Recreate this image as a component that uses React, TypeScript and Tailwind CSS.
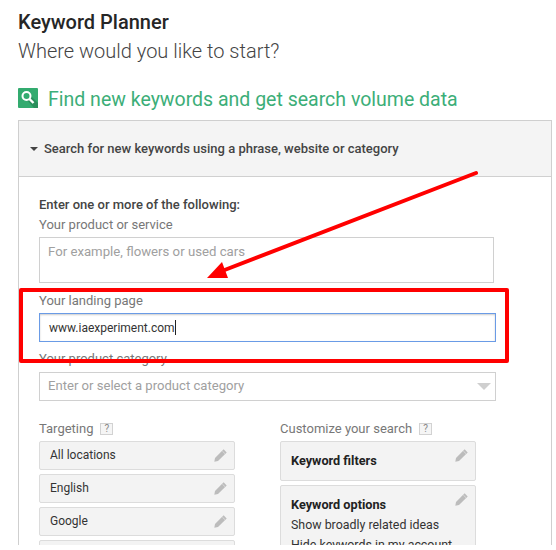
import React from "react";

const roboto = "[font-family:Roboto,'Liberation_Sans',sans-serif]";

function Pencil() {
  return (
    <svg width="13" height="13" viewBox="0 0 13 13" className="absolute right-[7px] top-[7px]">
      <path d="M9.6 0.3 L12.7 3.4 L4 12 L0.3 12.8 L1 9 Z" fill="#bcbcbc" />
      <path d="M8.3 2 L11 4.7" stroke="#e6e6e6" strokeWidth="0.7" />
    </svg>
  );
}

function Help() {
  return (
    <span className="ml-[7px] inline-flex h-[12px] w-[13px] items-center justify-center border border-[#d2d2d2] bg-[#f5f5f5] text-[10px] leading-none text-[#888]">
      ?
    </span>
  );
}

function Card({ children }: { children?: React.ReactNode }) {
  return (
    <div className="relative flex h-[29px] w-[196px] shrink-0 items-center rounded-[2px] border border-[#dcdcdc] bg-[#f3f3f3] pb-[2px] pl-[10px] text-[12px] text-[#333]">
      {children}
      <Pencil />
    </div>
  );
}

export default function App() {
  return (
    <div className={`relative h-[545px] w-[556px] overflow-hidden bg-white ${roboto}`}>
      <div className="pl-[18px] pt-[10px]">
        <h1 className="text-[20px] font-medium leading-[24px] text-[#262626]">Keyword Planner</h1>
        <p className="mt-[5px] text-[20px] font-light leading-[24px] text-[#444]">Where would you like to start?</p>
        <div className="mt-[24px] flex items-start">
          <svg width="20" height="20" viewBox="0 0 20 20" className="mt-px shrink-0">
            <rect width="20" height="20" rx="1" fill="#33ab6f" />
            <path d="M9 12 L13 8 L20 15 L20 20 L16 20 Z" fill="#2a8f5c" />
            <circle cx="8.5" cy="8" r="4" fill="none" stroke="#fff" strokeWidth="2" />
            <path d="M11.5 11 L15.5 15" stroke="#fff" strokeWidth="2.4" />
          </svg>
          <h2 className="ml-[10px] mt-px text-[19.5px] leading-[24px] text-[#3cae78]">Find new keywords and get search volume data</h2>
        </div>
        <div className="mt-[8px] w-[534px] border-x border-t border-[#cfcfcf]">
          <div className="flex h-[56px] items-center border-b border-[#d0d0d0] bg-[#f4f4f4] pl-[11px]">
            <span className="h-0 w-0 border-x-[4px] border-t-[4px] border-x-transparent border-t-[#444]" />
            <span className="ml-[6px] text-[13px] font-medium text-[#444]">Search for new keywords using a phrase, website or category</span>
          </div>
          <div className="pl-[20px] pt-[20px]">
            <div className="text-[13px] font-medium leading-[16px] text-[#444]">Enter one or more of the following:</div>
            <div className="mt-[4px] text-[13px] leading-[16px] text-[#777]">Your product or service</div>
            <div className="mt-[4px] h-[46px] w-[455px] border border-[#d0d0d0] pl-[8px] pt-[6px] text-[13.2px] leading-[16px] text-[#a0a0a0]">For example, flowers or used cars</div>
            <div className="mt-[10px] text-[13px] leading-[16px] text-[#777]">Your landing page</div>
            <div className="mt-[4px] flex h-[29px] w-[457px] items-center border border-[#6a9be6] pl-[9px] text-[12px] text-[#333] shadow-[inset_0_1px_2px_rgba(0,0,0,0.2)]">
              www.iaexperiment.com<span className="h-[15px] w-px bg-[#222]" />
            </div>
            <div className="mt-[9px] text-[13px] leading-[16px] text-[#777]">Your product category</div>
            <div className="relative mt-[5px] flex h-[29px] w-[457px] items-center border border-[#d0d0d0] pb-[2px] pl-[8px] text-[13.1px] text-[#a0a0a0]">
              Enter or select a product category
              <span className="absolute right-[4px] top-[10px] h-0 w-0 border-x-[7px] border-t-[7px] border-x-transparent border-t-[#cfcfcf]" />
            </div>
            <div className="mt-[20px] flex">
              <div className="w-[241px]">
                <div className="flex items-center text-[13px] leading-[16px] text-[#777]">Targeting<Help /></div>
                <div className="mt-[4px] flex flex-col gap-[4px]">
                  <Card>All locations</Card>
                  <Card>English</Card>
                  <Card>Google</Card>
                  <Card />
                </div>
              </div>
              <div>
                <div className="flex items-center text-[13px] leading-[16px] text-[#777]">Customize your search<Help /></div>
                <div className="relative mt-[4px] flex h-[40px] w-[196px] items-center rounded-[2px] border border-[#dcdcdc] bg-[#f3f3f3] pl-[10px] text-[12.7px] font-bold text-[#222]">
                  Keyword filters
                  <Pencil />
                </div>
                <div className="relative mt-[4px] h-[90px] w-[196px] rounded-[2px] border border-[#dcdcdc] bg-[#f3f3f3] pl-[10px] pt-[9px] text-[12.4px] leading-[20px] text-[#333]">
                  <div className="text-[12.7px] font-bold text-[#222]">Keyword options</div>
                  <div>Show broadly related ideas</div>
                  <div>Hide keywords in my account</div>
                  <Pencil />
                </div>
              </div>
            </div>
          </div>
        </div>
      </div>

      <svg className="pointer-events-none absolute inset-0" width="556" height="545" viewBox="0 0 556 545">
        <path d="M476 173 L222 271" stroke="#ff0000" strokeWidth="4" strokeLinecap="round" />
        <path d="M207 278 L222 262 L228 278 Z" fill="#ff0000" />
      </svg>
      <div className="pointer-events-none absolute left-[19px] top-[288px] h-[75px] w-[490px] rounded-[2px] border-[4px] border-[#ff0000]" />
    </div>
  );
}
